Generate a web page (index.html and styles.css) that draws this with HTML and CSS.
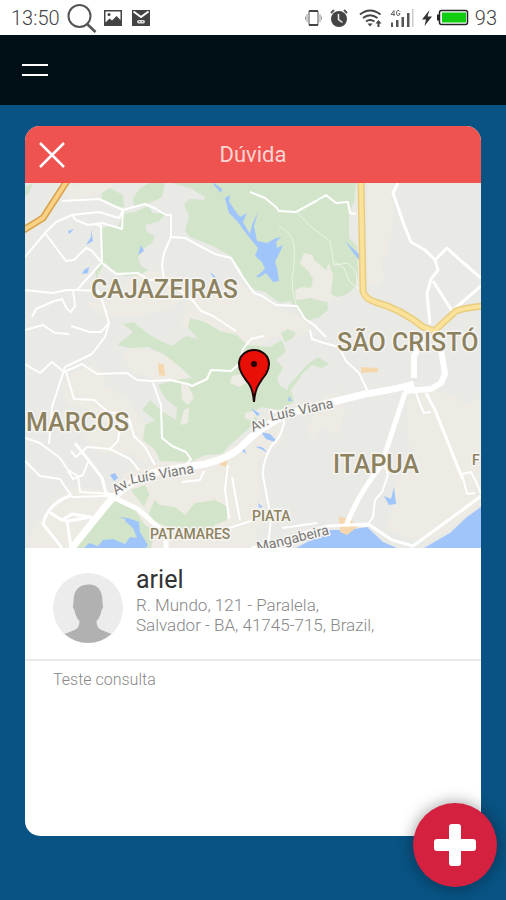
FILE: index.html
```html
<!DOCTYPE html>
<html lang="pt-BR">
<head>
<meta charset="utf-8">
<meta name="viewport" content="width=device-width, initial-scale=1">
<title>Dúvida</title>
<link rel="stylesheet" href="styles.css">
</head>
<body>
<div class="statusbar">
	<div class="status_left">
		<span>13:50</span>
		<svg width="30" height="30" viewBox="0 0 30 30"><circle cx="12.500" cy="13" r="11" fill="none" stroke="#555" stroke-width="2"/><path d="M20 21l8.500 8" stroke="#555" stroke-width="2.500"/></svg>
		<svg class="ico_img" width="18" height="16" viewBox="0 0 18 16"><path fill="#444" fill-rule="evenodd" d="M0 0h18v16H0zM1.500 1.500v11l4-4 2.500 2 4.500-4.500 4 4v-8.500z"/><circle cx="5" cy="4.500" r="1.500" fill="#444"/></svg>
		<svg width="18" height="16" viewBox="0 0 18 16"><path fill="#444" d="M0 0h18v16H0z"/><path d="M1.500 1.500L9 7l7.500-5.500" fill="none" stroke="#fff" stroke-width="2"/><rect x="5" y="10" width="8" height="3.500" rx="1.700" fill="#ddd"/><path d="M7 11h1v1H7zM10 11h1v1h-1z" fill="#555"/></svg>
	</div>
	<div class="status_right">
		<svg width="17" height="18" viewBox="0 0 17 18"><rect x="4" y="1.500" width="9" height="15" rx="1" fill="#fff" stroke="#555" stroke-width="1"/><path d="M4 2h9M4 16h9" stroke="#444" stroke-width="2"/><path d="M2 5v8M.5 7.500v3M15 5v8M16.500 7.500v3" stroke="#999"/></svg>
		<svg class="ico_clock" width="18" height="18" viewBox="0 0 18 18"><circle cx="9" cy="10" r="8" fill="#444"/><path d="M1 4l3-3M17 4l-3-3" stroke="#555" stroke-width="2"/><path d="M8.500 5v5.500l4 3" fill="none" stroke="#eee" stroke-width="1.500"/></svg>
		<svg class="ico_wifi" width="23" height="18" viewBox="0 0 23 18"><g fill="none" stroke="#444" stroke-width="2"><path d="M1 5.500Q11 -2.500 21.500 5.500M4 9Q11 3.500 18.500 9M7 12.500Q11 9.500 15.500 12.500"/></g><path d="M8.500 14.500h5L11 17.500zM19.500 11l3 3.500h-2V18h-2v-3.500h-2z" fill="#444"/></svg>
		<svg class="ico_signal" width="24" height="18" viewBox="0 0 24 18"><g fill="none" stroke="#666"><path d="M4 7V1.500L1 5.500h4M10 2.500Q9.500 1.500 8 1.500 6.500 1.500 6.500 4t1.500 2.500q2 0 2-2H8.500"/></g><path d="M1 13.500h2V18H1zM6 11h2.500v7H6zM11.500 8H14v10h-2.500zM17 4h2.500v14H17z" fill="#555"/><path d="M22 0h1.500v18H22z" fill="#ccc"/></svg>
		<svg width="10" height="16" viewBox="0 0 10 16"><path d="M7.500 0L0 9.500h4L2.500 16 10 6.500H5.500z" fill="#333"/></svg>
		<svg class="ico_batt" width="32" height="17" viewBox="0 0 32 17"><rect x="2.500" y="1.500" width="28" height="14" rx="2" fill="#fff" stroke="#222" stroke-width="1.500"/><path d="M1 5.500v6" stroke="#222" stroke-width="2"/><rect x="5" y="3.500" width="24" height="10" fill="#1c1"/></svg>
		<span>93</span>
	</div>
</div>

<header class="topbar">
	<button class="menu_btn" type="button" aria-label="Menu"></button>
</header>

<main class="card">
	<div class="card_head">
		<button class="close_btn" type="button" aria-label="Fechar"><svg width="26" height="26" viewBox="0 0 26 26"><path d="M1 1l24 24M25 1L1 25" stroke="#fff" stroke-width="2.500"/></svg></button>
		<h1>Dúvida</h1>
	</div>

	<svg class="map" viewBox="25 183 456 365">
		<rect x="25" y="183" width="456" height="365" fill="#e9e9e6"/>
		<!-- areas urbanas -->
		<g fill="#eeebe4">
			<path d="M367 183h31l-4 15-2 35-6 22-5 7 3 16-8 8-8-3z"/>
			<path d="M407 400l25-10 20 5 14 10 15-8v108l-24 18-27 19-20-4-24-9 6-18 4-31 16-16 3-13-7-7z"/>
			<path d="M62 385l12-14 20-6 12 12-2 8 24 15 9 14 18 18 8 25-17 7-14-10-36-2-16-17 15-10-6-16-22-5z"/>
			<path d="M30 535l24-34 20-14 30 3 10 6 11-23 44-14 48-3 32-19 22-18 14 2-3 20-24 20 1 26 6 23-8 22-4 26H30z"/>
			<path d="M121 356l13-9 27 6 15 9 14 6-4 13-33-2-20-7z"/>
			<path d="M172 333l10-7 5-30 28-3 24-10 16 12 31 16 20 8 4 11-17 9-20-3-28 21-10-9-45-22z"/>
			<path d="M272 285l22 1 12-11 8 6 5 16-11 7-24-4z"/>
			<path d="M322 399l15-9 8 20-8 26-16-8-9 12-5-12z"/>
			<path d="M60 188l30-5h24l-6 8-34 10-10-5zM86 303l30-6 18-22 23-5 17 8 9 20-12 10-40 10-30-3z"/>
		</g>
		<!-- verde -->
		<g fill="#d2e5ca">
			<path d="M172 183l18 5 15 9-1 3-14-1-6 5 5 12-4 14 5 7 23 9 19 11 9 14 5 13 10 6 9 2 15 11 10-2 7 8 8 12 13-3 10-8-1-11 19-4 9-8 3-11-1-30-8-8v-24l5-12 2-19z"/>
			<path d="M123 214l12-2 13-6 5 7 13 1-8 8-13 3 2 7 8 4-3 7-10 7-4 8 3 8 7 4-8 5-15 1-8-4-7-4-5-6-9 17-1-9 7-13v-28l8-4 8 2z"/>
			<path d="M102 193l8-5 13 7 1 12-12-1-11-6zM140 188l10-5h15l-3 14-10 5-18 5-1-9z"/>
			<path d="M117 345l16-13-10-8 10-2 17 13 13 7 9 4 14-10 12 3-10-11 2-10 15 4 15 9 17 4 10 10 23 2 12-7 4 12-10 8 7 8-6 10 3 8 12 6 2 10-14 8-18-3-10 5 6 8-11 10-17 15-8 9-17 1-15 7-30-1-5-11-12-10 2-15 10-5-13-10 8-10 13 12 13 8 1-12-12-10-7-13 17-5 17-2-12-11-15-12-17-8-18 1z"/>
			<path d="M288 386l10-11 9-10 11-8 11 7-7 4-10-3-9 8-9 13-6 7z"/>
			<path d="M74 548l34-43 7-7 20 12 10 15 10 5-4 18z"/>
			<path d="M131 490l14-5 6 12 9 8 15 2 10 8 10-12 20-3 13 7-1 13-12 5-10 10-15-5-18-2-17-6-10-14z"/>
			<path d="M281 333l7-4 8 4-3 5-8 4zM25 187l8-4-5 12-3 1z"/>
		</g>
		<g fill="#eeebe4">
			<path d="M304 253l8 2 3 6 11 9 3-7 4 12-2 19 8 5-14 3-14-4-15 2-1-10 7-3 9 1 2-9-5-8-8-8zM181 383l7 2 6 13-6 7-6-5zM232 376l10-2 6 8-9 5-9-4zM184 410l5-3-1 16-8 2zM150 493l6 4-8 18-5-6zM245 413l7-2 8 2-8 7-7-1z"/>
		</g>
		<!-- agua -->
		<g fill="#a0c5fb">
			<path d="M225 198l5-3-1 6 5 8 6 8 7-4-4 9 7 12 2-9 6-13-4 14 3 15 10 2 9-5 5-1-5 5 1 6 6-3-3 7-5 10 2 6 2 13-6 1-7-9-6 4-4 0 9-8-3-7-7-6 3-8-5-6-8-10-8-11-8-8-2-7z"/>
			<path d="M214 183l8 6-1 4-8-9zM91 229l2 12-7 4 5-8zM68 231l6-2-5 5zM84 270l5-3-1 6-6 1zM141 245l3 6-6 4zM210 272l7 6-3 1z"/>
			<path d="M261 432l9 2 6 6-1 2-9-3zM256 447q7-2 11 6-5-4-11-6zM238 451l5-7 3 10-5-4-4 4zM384 496l7 3 3-12 2 17-7 1zM289 396l3 5h-4zM251 408l9 6-3 2zM110 475l5-2 3 5-4 3zM258 503l5 4-4 1z"/>
			<path d="M84 548l5-5 9 3 5-6 10-1 12 5 5-7 7 1-4-10-8-7 1 9-1-11-8-2 11 1 11 4 1 10 8 13-2 3z"/>
			<path d="M296 548l34-18h18l19-3 16 15 14 6zM424 548l26-15 17-16 14-10v41z"/>
			<path d="M345 241l14 13v6l-7-9z"/>
		</g>
		<g fill="#f5d7ad"><path d="M340 532l-1-16 13 5 5 6-10 8zM158 363l6 2 1 11-6-1zM222 459l6-3-2 11-6-2zM361 367l17 1v4l-17 1z"/></g>
		<!-- ruas -->
		<g fill="none" stroke="#fff" stroke-width="2" stroke-linejoin="round">
			<path d="M62 201l37-2 24 11 22-6 11 5 10 6h5v22l-7 16-2 12 2 15 12 8 9 6 9 8 7 9 12 5 23 15M171 237l14 1 30 16 16 4 11 18 12 17 8 3 14 9 21 1 8 13 9 6 12 12"/>
			<path d="M45 233l11-11 16-7 27-3 13 4 7 2 4-8-1 19-20-6-14 2-12-5-4-5M45 233l21 28 8-1 12-12 6 3 10 12 14 11 22-1 11 7 20-1M45 233L25 257M102 262l-1-36-6-2"/>
			<path d="M102 262l-25 28h-10l-15 3-27-3M77 290l21 1 5 12 6 20-4 14-13 17-27 13-13 40-3 37M109 323l-8 9h-11l-19-6M32 317l4-8 16-7 10-3 5 10 4 3 4-6-2-16M25 330l18-5 12 8 14 1"/>
			<path d="M25 364l15 9 12-11 12 10 18-8 15 10 30-1 10 7 15 1 18-1 18 4 4 2 15-7 4-9 20 1 8-7 4-15 8-10 13-3M66 372l8 27 20 1 14 12 20 3 6 21 11 11 10 18"/>
			<path d="M153 383l8 22 1 33 10 8 14 6 5 7-6 7M121 421l-3 20-8 8-23-2-11 10-5-6M25 438l15 5 20 15 8 12 10 6 2 16 33 2M110 449l20 10 9 11M25 461l15 15 20 3 12 18 35-1M68 471l5 8 10-4 5-13"/>
			<path d="M72 495q-24 8-29 29l19 24M62 520l10-6 19 3-22 4-7-1-13-8M67 521l4 27M75 443l18 23 9 12 5 19" stroke-width="3"/>
			<path d="M228 465l-3 24 4 30M232 477l8 43M182 482l18-2 4-9"/>
			<path d="M250 192l15 6 11 9 3 4 17 1 20-11 10-6 10 8 12-1 2 11 6 1"/>
			<path d="M270 411q13 0 14 12-3 15-12 22-10 17-9 31l8 42-3 30M310 330l2 9 12 4 15 4 7 14 13 12 9 19M220 531l37-12M282 528l35-5"/>
			<path d="M279 226q12 6 15 18 1 22-2 34 0 15 4 26" stroke="#edf3e8" stroke-width="1"/>
			<path d="M296 211l13 14 21 16 4 24 14-2 8 9 2 17-9-8-5-13-9-6" stroke="#edf3e8" stroke-width="1"/>
			<path d="M398 183l-5 10 11 32 7 17 14 8 10 10 3 10-7 9-4 15 3 30M434 261l13-13 13 12 21 18M481 286l-29 25-19-30M426 393l9 17 28 70" stroke-width="3"/>
			<path d="M462 474l9-2 6 12 4 10M462 474l5 20 8-1M416 393l4 11 4 9 7-1M384 463l4 12-6 17-7 8-2 17-6 9-16-1"/>
		</g>
		<g fill="none" stroke="#fff" stroke-linejoin="round">
			<path d="M405 393q-12 36-24 73-23 28-35 60" stroke-width="5"/>
			<path d="M414 378v-22l8-14M441 349l4 25-4 9-10 6-27 2" stroke-width="6"/>
			<path d="M72 548l32-40q22-28 56-37l45-7q28-7 39-20 26-26 60-35l61-15q28-4 49-10" stroke-width="7"/>
			<path d="M104 493l34 16 20 18 8 9v12" stroke-width="5"/>
			<path d="M252 548l36-9q18-8 40-13l40-2 24 16 21 6 30-22 22-16 16-12" stroke-width="3"/>
		</g>
		<g fill="none" stroke-linejoin="round">
			<path d="M67 181L43 218 22 231" stroke="#d7a14b" stroke-width="7"/>
			<path d="M67 181L43 218 22 231" stroke="#fbd285" stroke-width="4"/>
			<path d="M361 181l2 110q2 8 12 11 26 7 48 25l14 5M432 333l24-22q8-3 27-5" stroke="#e9cd7f" stroke-width="7"/>
			<path d="M361 181l2 110q2 8 12 11 26 7 48 25l14 5M432 333l24-22q8-3 27-5" stroke="#fbe29b" stroke-width="4"/>
		</g>
		<g class="map_lbl">
			<text class="lbl_big" x="91" y="298">CAJAZEIRAS</text>
			<text class="lbl_big" x="337" y="351">SÃO CRISTÓ</text>
			<text class="lbl_big" x="26" y="431">MARCOS</text>
			<text class="lbl_big" x="333" y="473">ITAPUA</text>
			<text class="lbl_small" x="252" y="521">PIATA</text>
			<text class="lbl_small" x="150" y="539">PATAMARES</text>
			<text class="lbl_small" x="472" y="465">F</text>
			<text class="lbl_road" transform="translate(116 495) rotate(-34)">Av.</text>
			<text class="lbl_road" transform="translate(131 484) rotate(-10)">Luís Viana</text>
			<text class="lbl_road" transform="translate(253 432) rotate(-25)">Av.</text>
			<text class="lbl_road" transform="translate(271 421) rotate(-12)">Luís Viana</text>
			<text class="lbl_road" transform="translate(258 552) rotate(-14)">Mangabeira</text>
		</g>
		<path d="M254 402q-1-12-5-18-4-5-7-10-3-5-3-10a15 14 0 0 1 30 0q0 5-3 10-4 5-7 10-4 6-5 18z" fill="#e80f06" stroke="#1c0505" stroke-width="2"/>
		<circle cx="254" cy="364" r="3" fill="#2c0303"/>
	</svg>

	<section class="user">
		<svg class="avatar" viewBox="0 0 70 70" aria-hidden="true"><circle cx="35" cy="35" r="35" fill="#ececec"/><path d="M11.500 61q5-2 10-4 5-2 5-9-4-4-5-11-2-2-1.500-5 .5-1 .5-3 0-17 14.500-17.500T49.500 29q0 2 .5 3 .5 3-1.500 5-1 7-5 11 0 7 5 9 5 2 10 4Q48 70 35 70T11.500 61z" fill="#b1b1b1"/></svg>
		<div class="user_info">
			<h2>ariel</h2>
			<p>R. Mundo, 121 - Paralela,<br>Salvador - BA, 41745-715, Brazil,</p>
		</div>
	</section>
	<p class="message">Teste consulta</p>
</main>

<button class="add_btn" type="button" aria-label="Adicionar"><svg width="42" height="42" viewBox="0 0 42 42"><path d="M18 0h6q3 0 3 3v12h12q3 0 3 3v6q0 3-3 3H27v12q0 3-3 3h-6q-3 0-3-3V27H3q-3 0-3-3v-6q0-3 3-3h12V3q0-3 3-3z" fill="#fff"/></svg></button>
</body>
</html>
```
FILE: styles.css
```css
*{ box-sizing:border-box;}
html,body,h1,h2,p{ margin:0; padding:0; font-weight:400;}
body{ display:flex; flex-direction:column; min-height:100vh; background:#085383; font-family:Roboto,"Liberation Sans",sans-serif;}
button{ padding:0; border:0; background:none; cursor:pointer;}
svg{ display:block; flex:none;}

.statusbar{ display:flex; justify-content:space-between; height:35px; padding:0 9px 0 11px; background:#fff; color:#444; font-size:20px; font-weight:300;}
.status_left,.status_right{ display:flex; align-items:center;}
.status_left{ gap:7px;}
.status_right{ gap:8px;}
.ico_img{ margin-right:3px;}
.ico_clock{ margin-right:3px;}
.ico_batt{ margin:0 -2px 0 -3px;}

.topbar{ display:flex; align-items:center; height:70px; padding:0 22px; background:#010f17;}
.menu_btn{ width:26px; height:12px; border-top:2px solid #fff; border-bottom:2px solid #fff;}

.card{ flex:1; margin:21px 25px 64px; border-radius:15px; background:#fff; overflow:hidden;}
.card_head{ display:grid; grid-template-columns:26px 1fr 26px; align-items:center; height:57px; padding:0 14px; background:#ef5350;}
.card_head h1{ color:#fbd5d4; font-size:22px; text-align:center;}
.map{ width:100%; height:auto;}
.map_lbl text{ fill:#8d8260; stroke:#f6f5f1; stroke-width:3px; stroke-linejoin:round; paint-order:stroke; font-weight:500;}
.map_lbl .lbl_big{ font-size:25px;}
.map_lbl .lbl_small{ font-size:14px;}
.map_lbl .lbl_road{ fill:#777; font-size:14px; font-weight:400;}

.user{ display:flex; gap:13px; height:113px; padding:17px 28px; border-bottom:2px solid #eaeaea;}
.avatar{ width:70px; height:70px; margin-top:8px;}
.user_info h2{ color:#333; font-size:25px; line-height:30px;}
.user_info p{ color:#999; font-size:17px; font-weight:300; line-height:20px;}
.user_info p,.message{ color:#888;}
.message{ padding:9px 28px; font-size:16px; font-weight:300; line-height:20px;}

.add_btn{ position:fixed; right:9px; bottom:13px; display:flex; align-items:center; justify-content:center; width:84px; height:84px; border-radius:50%; background:#d3213f; box-shadow:0 0 16px rgba(0,0,0,.4);}
```
